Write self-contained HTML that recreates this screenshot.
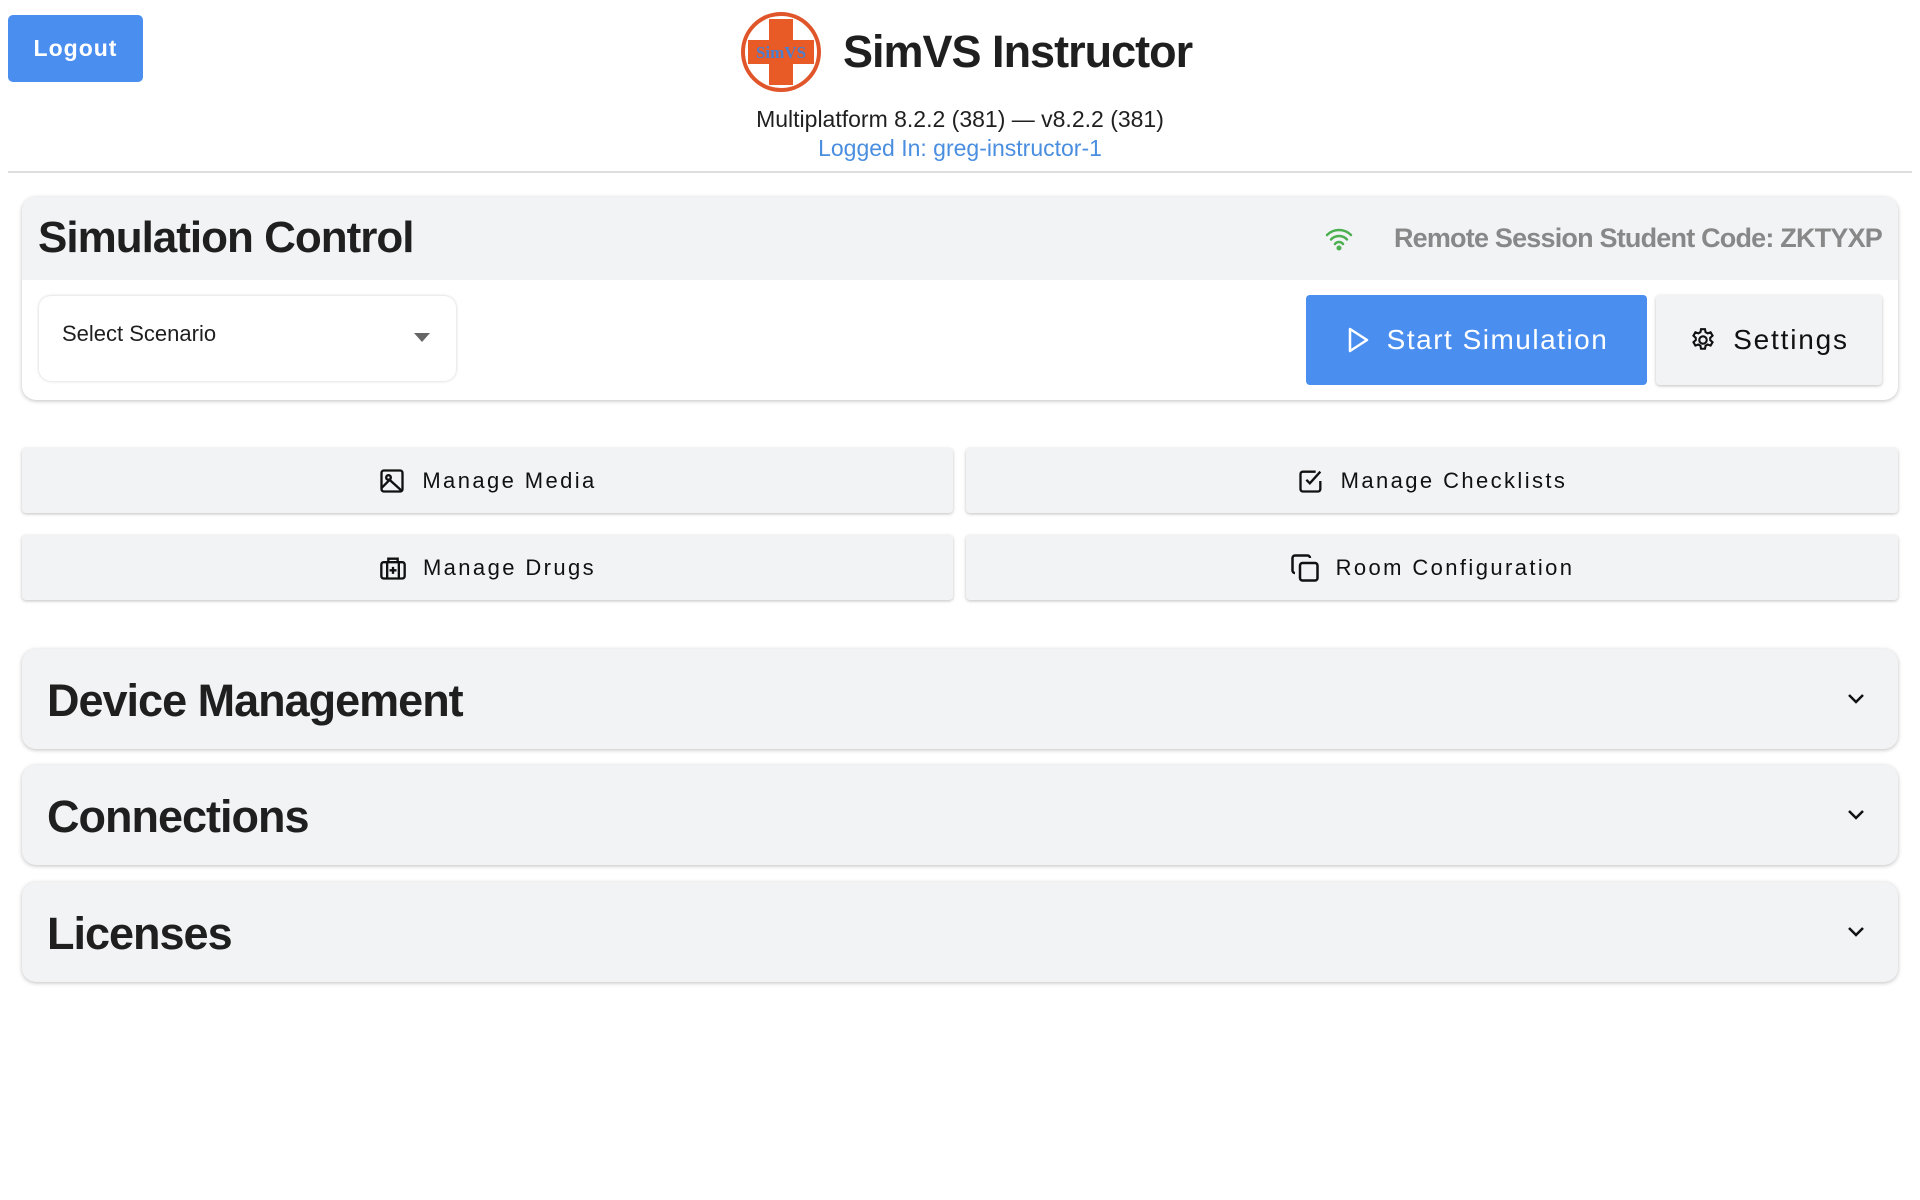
<!DOCTYPE html>
<html><head><meta charset="utf-8"><style>
*{box-sizing:border-box;margin:0;padding:0}
body{width:1920px;height:1200px;background:#fff;font-family:"Liberation Sans",sans-serif;color:#1f1f1f;position:relative;overflow:hidden}
.abs{position:absolute}
.logout{left:8px;top:15px;width:135px;height:67px;background:#4a8ef0;border-radius:5px;color:#fff;font-weight:bold;font-size:23px;letter-spacing:1px;display:flex;align-items:center;justify-content:center}
.title{left:843px;top:26px;font-size:45px;font-weight:bold;letter-spacing:-1px}
.sub{left:0;width:1920px;text-align:center;font-size:23px}
.hr{left:8px;top:171px;width:1904px;height:2px;background:#ddd}
.card{left:22px;top:197px;width:1876px;height:203px;border-radius:14px;box-shadow:0 1px 4px rgba(0,0,0,.25);background:#fff;overflow:hidden}
.band{position:absolute;left:0;top:0;width:100%;height:83px;background:#f2f3f5}
.btn{background:#f2f3f5;box-shadow:0 1px 3px rgba(0,0,0,.25);border-radius:4px;display:flex;align-items:center;justify-content:center;font-size:22px;letter-spacing:2.4px;color:#111}
.btn svg{margin-right:16px}
.acc{left:22px;width:1876px;height:100px;background:#f2f3f5;border-radius:14px;box-shadow:0 1px 4px rgba(0,0,0,.25)}
.acc span{position:absolute;left:25px;top:26px;font-size:45px;font-weight:bold;letter-spacing:-1px}
.acc svg{position:absolute;right:32px;top:44px}
</style></head><body>
<div class="abs logout">Logout</div>
<svg class="abs" style="left:740px;top:11px" width="82" height="82" viewBox="0 0 82 82">
<circle cx="41" cy="41" r="38" fill="#fff" stroke="#e0562a" stroke-width="4"/>
<rect x="29" y="8" width="24" height="66" fill="#e85a26"/>
<rect x="8" y="29" width="66" height="24" fill="#e85a26"/>
<text x="41" y="47" font-size="17" font-family="Liberation Serif,serif" fill="#4a7fd0" text-anchor="middle" font-weight="bold">SimVS</text>
</svg>
<div class="abs title">SimVS Instructor</div>
<div class="abs sub" style="top:106px">Multiplatform 8.2.2 (381) — v8.2.2 (381)</div>
<div class="abs sub" style="top:135px;color:#4a8ee0">Logged In: greg-instructor-1</div>
<div class="abs hr"></div>
<div class="abs card">
<div class="band"></div>
<div class="abs" style="left:16px;top:16px;font-size:44px;font-weight:bold;letter-spacing:-1px">Simulation Control</div>
<svg class="abs" style="left:1302px;top:30px" width="30" height="24" viewBox="0 0 30 24" fill="none" stroke="#4caf50" stroke-width="2.5" stroke-linecap="round"><path d="M3 8a17 17 0 0 1 24 0M7 12.5a11 11 0 0 1 16 0M11 17a5 5 0 0 1 8 0"/><circle cx="15" cy="21" r="1.3" fill="#4caf50"/></svg>
<div class="abs" style="right:16px;top:26px;font-size:27px;font-weight:bold;color:#888;letter-spacing:-.8px;white-space:nowrap">Remote Session Student Code: ZKTYXP</div>
<div class="abs" style="left:17px;top:99px;width:417px;height:85px;border-radius:12px;box-shadow:0 0 3px rgba(0,0,0,.2)"></div>
<div class="abs" style="left:40px;top:124px;font-size:22px">Select Scenario</div>
<svg class="abs" style="left:392px;top:136px" width="16" height="9"><path d="M0 0h16L8 9z" fill="#666"/></svg>
<div class="abs" style="left:1284px;top:98px;width:341px;height:90px;background:#4a8ef0;border-radius:4px;color:#fff;font-size:28px;letter-spacing:1.5px;display:flex;align-items:center;justify-content:center"><svg width="26" height="28" viewBox="0 0 26 28" style="margin-right:16px" fill="none" stroke="#fff" stroke-width="2.5" stroke-linejoin="round"><path d="M5 3l17 11L5 25z"/></svg>Start Simulation</div>
<div class="abs btn" style="left:1634px;top:98px;width:226px;height:90px;font-size:28px;letter-spacing:1.8px"><svg width="28" height="28" viewBox="0 0 24 24" fill="none" stroke="#111" stroke-width="1.8"><path d="M10.3 2.7h3.4l.5 2.6 1.8 1 2.5-.9 1.7 2.9-2 1.8v2l2 1.8-1.7 2.9-2.5-.9-1.8 1-.5 2.6h-3.4l-.5-2.6-1.8-1-2.5.9-1.7-2.9 2-1.8v-2l-2-1.8 1.7-2.9 2.5.9 1.8-1z"/><circle cx="12" cy="12" r="3.2"/></svg>Settings</div>
</div>
<div class="abs btn" style="left:22px;top:448px;width:931px;height:65px"><svg width="28" height="28" viewBox="0 0 24 24" fill="none" stroke="#111" stroke-width="2"><rect x="3" y="3" width="18" height="18" rx="2"/><circle cx="9" cy="9" r="2"/><path d="M3 18l7-7 11 10"/></svg>Manage Media</div>
<div class="abs btn" style="left:966px;top:448px;width:932px;height:65px"><svg width="28" height="28" viewBox="0 0 24 24" fill="none" stroke="#111" stroke-width="2"><path d="M20 12v7a2 2 0 0 1-2 2H5a2 2 0 0 1-2-2V6a2 2 0 0 1 2-2h11"/><path d="M8 11l3 3 9-10"/></svg>Manage Checklists</div>
<div class="abs btn" style="left:22px;top:535px;width:931px;height:65px"><svg width="28" height="28" viewBox="0 0 24 24" fill="none" stroke="#111" stroke-width="2"><rect x="2" y="7" width="20" height="14" rx="2"/><path d="M8 7V4h8v3M7 7v14M17 7v14M12 11v6M9 14h6"/></svg>Manage Drugs</div>
<div class="abs btn" style="left:966px;top:535px;width:932px;height:65px"><svg width="30" height="30" viewBox="0 0 24 24" fill="none" stroke="#111" stroke-width="2"><rect x="8" y="8" width="14" height="14" rx="2"/><path d="M16 4a2 2 0 0 0-2-2H4a2 2 0 0 0-2 2v10a2 2 0 0 0 2 2"/></svg>Room Configuration</div>
<div class="abs acc" style="top:649px"><span>Device Management</span><svg width="20" height="12" viewBox="0 0 20 12" fill="none" stroke="#111" stroke-width="2.5"><path d="M3 2l7 7 7-7"/></svg></div>
<div class="abs acc" style="top:765px"><span>Connections</span><svg width="20" height="12" viewBox="0 0 20 12" fill="none" stroke="#111" stroke-width="2.5"><path d="M3 2l7 7 7-7"/></svg></div>
<div class="abs acc" style="top:882px"><span>Licenses</span><svg width="20" height="12" viewBox="0 0 20 12" fill="none" stroke="#111" stroke-width="2.5"><path d="M3 2l7 7 7-7"/></svg></div>
</body></html>
